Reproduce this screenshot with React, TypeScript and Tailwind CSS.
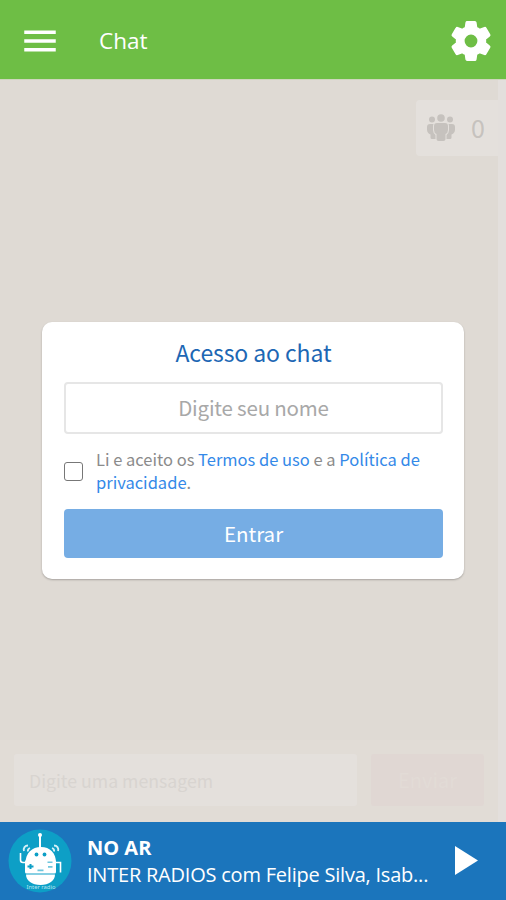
import React, { useState } from 'react';
import { MdMenu, MdSettings } from 'react-icons/md';

const RobotLogo: React.FC = () => (
  <svg width="64" height="64" viewBox="0 0 64 64" className="shrink-0">
    <circle cx="32" cy="32" r="31.500" fill="#0d9fc6" />
    <g fill="#fff">
      <circle cx="32" cy="6" r="2" />
      <rect x="31" y="6" width="2" height="13" />
      <path d="M17.500 34C17.500 24 24 18 33 18s15 6 15 16z" />
      <rect x="17" y="31" width="31" height="13.500" rx="1.500" />
      <path d="M18 45.500h29c0 6-6 10.500-14.500 10.500S18 51.500 18 45.500z" />
    </g>
    <g fill="none" stroke="#fff" strokeWidth="1.6">
      <path d="M18 33.500h-3q-2.500 0-2.500-2.500v-7M47 33.500h5.500v10" />
    </g>
    <g fill="none" stroke="#d4f0f7" strokeWidth="1.8">
      <path d="M16 22c-1-3 1-5.500 4-5.500M20 22.500c-.5-2 .5-3 2-3.500M50 22c1-3-1-5.500-4-5.500M46 22.500c.5-2-.5-3-2-3.500" />
    </g>
    <g fill="#0d9fc6">
      <circle cx="28.500" cy="25.500" r="1.900" />
      <circle cx="36.500" cy="25.500" r="1.900" />
      <path d="M19.500 36.500h2v-1.500h2v1.500h2v2h-2V40h-2v-1.500h-2z" />
    </g>
    <path d="M39.500 32.500h5V34h-5zM40 37h4.500v1.800H40zM29.500 40.500h6v1.800h-6z" fill="#6fc6dd" />
    <text x="33" y="60" textAnchor="middle" fill="#b9e6f1" fontFamily="Noto Sans, sans-serif" fontSize="5.800">Inter radio</text>
  </svg>
);

const UsersIcon: React.FC = () => (
  <svg width="30" height="28" viewBox="0 0 30 28" fill="currentColor">
    <circle cx="15" cy="4" r="3.800" />
    <circle cx="6" cy="5.500" r="3" />
    <circle cx="24" cy="5.500" r="3" />
    <path d="M11 9h8q3 0 3 3v4q0 3-2.500 4v5q0 2-2 2h-5q-2 0-2-2v-5Q8 19 8 16v-4q0-3 3-3z" />
    <path d="M4 10h3.500q-.5 1-.5 2v4q0 3 2.500 5v4H6q-1.500 0-1.500-1.500V20.500Q1 19 1 15.500V13q0-3 3-3zM26 10h-3.500q.5 1 .5 2v4q0 3-2.500 5v4H24q1.500 0 1.500-1.500V20.500q3.500-1.500 3.500-5V13q0-3-3-3z" />
  </svg>
);

const Header: React.FC = () => (
  <header className="flex h-[79px] shrink-0 items-center bg-[#6ebe45] pl-[19px] pr-[11px] pt-[3px] text-white">
    <button aria-label="Menu">
      <MdMenu className="size-[42px]" />
    </button>
    <h1 className="ml-[38px] flex-1 text-[22.500px] leading-8">Chat</h1>
    <button aria-label="Configurações">
      <MdSettings className="size-[48px] [&>path:last-child]:stroke-white [&>path:last-child]:stroke-[0.8] [&>path:last-child]:[stroke-linejoin:round]" />
    </button>
  </header>
);

const AccessCard: React.FC = () => {
  const [name, setName] = useState('');
  const [accepted, setAccepted] = useState(false);

  return (
    <div className="ml-[42px] mr-[34px] h-[257px] rounded-[10px] bg-white pl-[22px] pr-[21px] pt-[13px] font-['Noto_Sans_CJK_SC',sans-serif] shadow-[0_1px_2px_rgba(0,0,0,0.25)]">
      <h2 className="text-center text-[23px] leading-[34px] tracking-[-0.1px] text-[#1d67b4]">Acesso ao chat</h2>
      <input
        value={name}
        onChange={(e) => setName(e.target.value)}
        placeholder="Digite seu nome"
        className="mt-[13px] block h-[52px] w-full rounded-[4px] border-2 border-[#e6e6e6] pb-[2px] text-center text-[20.500px] tracking-[-0.2px] text-[#555] outline-none placeholder:text-[#a8a8a8]"
      />
      <label className="mt-[14px] flex items-center">
        <input
          type="checkbox"
          checked={accepted}
          onChange={(e) => setAccepted(e.target.checked)}
          className="size-[19px] shrink-0 appearance-none rounded-[3px] border border-[#777] bg-white checked:bg-[#1b75bc]"
        />
        <div className="ml-[13px] whitespace-nowrap text-[16.500px] leading-[23px] text-[#8b8b8b]">
          <p>
            Li e aceito os <a className="text-[#3489e8]">Termos de uso</a> e a <a className="text-[#3489e8]">Política de</a>
          </p>
          <p>
            <a className="text-[#3489e8]">privacidade</a>.
          </p>
        </div>
      </label>
      <button className="mt-[15px] block h-[49px] w-full rounded-[4px] bg-[#76ade4] pb-px text-[20.500px] text-white">Entrar</button>
    </div>
  );
};

const Player: React.FC = () => (
  <footer className="flex h-[78px] shrink-0 items-center bg-[#1b75bc] pb-px pl-[8px] pr-[28px] text-white">
    <RobotLogo />
    <div className="ml-[15px] w-[345px] whitespace-nowrap font-['Open_Sans',sans-serif]">
      <p className="text-[20px] font-bold leading-[27px]">NO AR</p>
      <p className="text-[20px] leading-[27px] tracking-[-0.22px]">INTER RADIOS com Felipe Silva, Isab...</p>
    </div>
    <button aria-label="Tocar" className="ml-auto">
      <svg width="23" height="29" viewBox="0 0 23 29" fill="currentColor">
        <path d="M0 0l23 14.500L0 29z" />
      </svg>
    </button>
  </footer>
);

const App: React.FC = () => {
  return (
    <div className="flex h-[900px] w-[506px] flex-col overflow-hidden bg-[#dfdad4] font-['Open_Sans',sans-serif]">
      <Header />
      <main className="flex min-h-0 flex-1 border-t border-[#cfd6bd]">
        <div className="flex min-w-0 flex-1 flex-col">
          <div className="mt-[20px] flex h-[56px] w-[82px] items-center gap-[15px] self-end rounded-l-[4px] bg-[#e4e0dc] pl-[10px] text-[#c6c2be]">
            <UsersIcon />
            <span className="-mt-[2px] font-['Noto_Sans_CJK_SC',sans-serif] text-[25px] leading-8">0</span>
          </div>
          <div className="mt-[166px]">
            <AccessCard />
          </div>
          <div className="mt-auto flex h-[82px] items-center gap-[14px] bg-[#e1dcd6] px-[14px] pb-[2px]">
            <input
              placeholder="Digite uma mensagem"
              className="h-[52px] w-[343px] rounded-[3px] bg-[#e4e0dc] pb-px pl-[15px] font-['Noto_Sans_CJK_SC',sans-serif] text-[17.700px] placeholder:text-[#d8d4d0]"
            />
            <button className="h-[52px] min-w-0 flex-1 rounded-[3px] bg-[#e0d7d3] font-['Noto_Sans_CJK_SC',sans-serif] text-[20px] text-[#e2dbd6]">Enviar</button>
          </div>
        </div>
        <div className="w-[8px] bg-[#e3dfdc]" />
      </main>
      <Player />
    </div>
  );
};

export default App;
